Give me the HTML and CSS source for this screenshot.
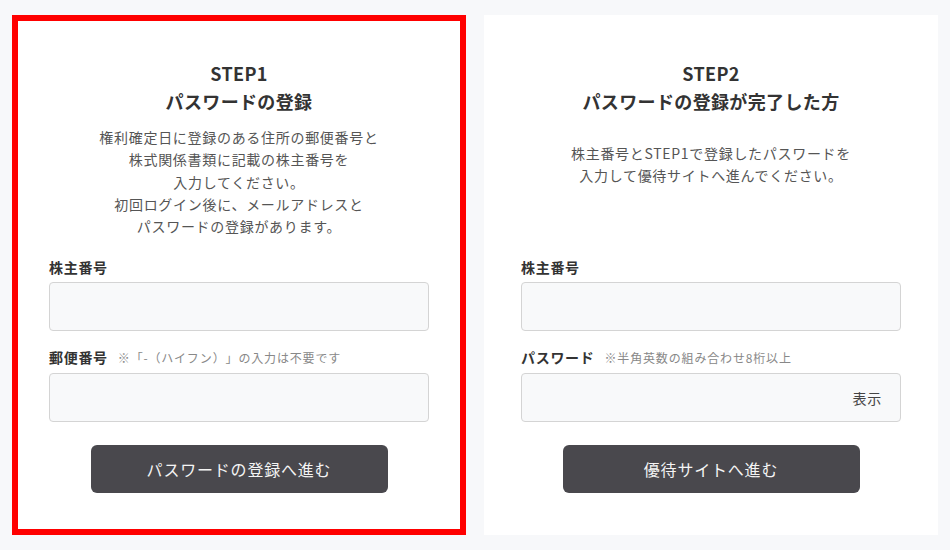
FILE: index.html
```html
<!DOCTYPE html>
<html lang="ja">
<head>
<meta charset="utf-8">
<title>ログイン</title>
<link rel="stylesheet" href="styles.css">
</head>
<body>
<main class="steps">
  <section class="card card--active">
    <h2 class="card-title">STEP1<br>パスワードの登録</h2>
    <p class="card-desc">権利確定日に登録のある住所の郵便番号と<br>株式関係書類に記載の株主番号を<br>入力してください。<br>初回ログイン後に、メールアドレスと<br>パスワードの登録があります。</p>
    <form class="form">
      <label class="label">株主番号</label>
      <input class="input" type="text">
      <label class="label label--next">郵便番号<span class="note">※「-（ハイフン）」の入力は不要です</span></label>
      <input class="input" type="text">
      <button type="button" class="btn">パスワードの登録へ進む</button>
    </form>
  </section>
  <section class="card">
    <h2 class="card-title">STEP2<br>パスワードの登録が完了した方</h2>
    <p class="card-desc card-desc--short">株主番号とSTEP1で登録したパスワードを<br>入力して優待サイトへ進んでください。</p>
    <form class="form">
      <label class="label">株主番号</label>
      <input class="input" type="text">
      <label class="label label--next">パスワード<span class="note">※半角英数の組み合わせ8桁以上</span></label>
      <div class="pw-field">
        <input class="pw-input" type="password">
        <span class="pw-toggle">表示</span>
      </div>
      <button type="button" class="btn">優待サイトへ進む</button>
    </form>
  </section>
</main>
</body>
</html>
```
FILE: styles.css
```css
* { box-sizing: border-box; }
html, body { margin: 0; padding: 0; }
body {
  background: #f7f8fa;
  font-family: "Noto Sans CJK JP", "Noto Sans", sans-serif;
  color: #333;
  width: 950px;
  height: 550px;
  overflow: hidden;
  text-spacing-trim: space-all;
}
.steps {
  display: flex;
  gap: 18px;
  padding: 15px 12px;
}
.card {
  width: 454px;
  height: 520px;
  background: #fff;
  padding: 44px 37px 42px;
  display: flex;
  flex-direction: column;
}
.card--active {
  box-shadow: inset 0 0 0 6px #ff0000;
}
.card-title {
  margin: 0;
  text-align: center;
  font-size: 18px;
  line-height: 28px;
  font-weight: 700;
  letter-spacing: 0.02em;
  color: #333;
}
.card-desc {
  margin: 11px 0 0;
  text-align: center;
  font-size: 14px;
  line-height: 22.3px;
  letter-spacing: 0.05em;
  color: #555;
}
.card-desc--short { margin-top: 27px; }
.form {
  margin-top: auto;
  display: flex;
  flex-direction: column;
}
.label {
  display: flex;
  align-items: baseline;
  font-size: 14px;
  line-height: 22px;
  font-weight: 700;
  letter-spacing: 0.05em;
  color: #333;
  margin-bottom: 4px;
}
.label--next { margin-top: 15px; }
.note {
  margin-left: 10px;
  font-size: 12px;
  font-weight: 400;
  letter-spacing: 0.07em;
  color: #888;
  text-spacing-trim: space-all;
}
.input, .pw-field {
  display: block;
  width: 100%;
  height: 49px;
  border: 1px solid #d4d4d4;
  border-radius: 4px;
  background: #f8f9fa;
  font: inherit;
  font-size: 14px;
  padding: 0 14px;
  outline: none;
}
.pw-field {
  display: flex;
  align-items: center;
  padding: 0 18px 0 14px;
}
.pw-input {
  flex: 1;
  min-width: 0;
  border: none;
  background: transparent;
  outline: none;
  font: inherit;
  height: 100%;
}
.pw-toggle {
  font-size: 14px;
  color: #444;
  letter-spacing: 0.05em;
}
.btn {
  display: block;
  width: 297px;
  height: 48px;
  margin: 23px auto 0;
  border: none;
  border-radius: 6px;
  background: #49484d;
  color: #f4f4f4;
  font-family: inherit;
  font-size: 16px;
  letter-spacing: 0.05em;
}
```
